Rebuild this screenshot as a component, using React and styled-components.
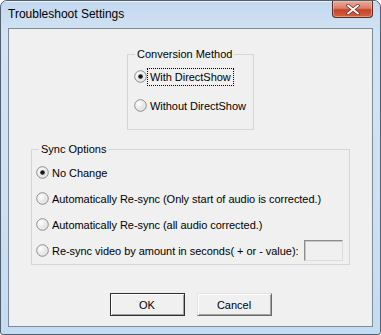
import React from 'react';
import styled, { createGlobalStyle } from 'styled-components';

const GlobalStyle = createGlobalStyle`
  html, body {
    margin: 0;
    padding: 0;
    background: #ffffff;
  }
  body {
    font-family: Tahoma, "Liberation Sans", Arial, sans-serif;
  }
  * {
    box-sizing: border-box;
  }
`;

const RadioMark = ({ checked }) => (
  <svg width="13" height="13" viewBox="0 0 13 13">
    <defs>
      <radialGradient id={checked ? 'rgOn' : 'rgOff'} cx="0.35" cy="0.35" r="0.7">
        <stop offset="0" stopColor="#ffffff" />
        <stop offset="1" stopColor="#d6d6d6" />
      </radialGradient>
    </defs>
    <circle cx="6.5" cy="6.5" r="5.8" fill={`url(#${checked ? 'rgOn' : 'rgOff'})`} stroke="#8e8f8f" strokeWidth="1" />
    <circle cx="6.5" cy="6.5" r="4.3" fill="none" stroke="#f4f4f4" strokeWidth="0.8" />
    {checked && <circle cx="6.5" cy="6.5" r="2.3" fill="#1a1a1a" />}
  </svg>
);

const Radio = ({ checked, focused, children }) => (
  <RadioRow>
    <RadioMark checked={checked} />
    <RadioLabel $focused={focused}>{children}</RadioLabel>
  </RadioRow>
);

export default function App() {
  return (
    <>
      <GlobalStyle />
      <Window>
        <TitleBar>
          <Title>Troubleshoot Settings</Title>
          <CloseButton>
            <svg width="14" height="11" viewBox="0 0 14 11">
              <path d="M2 1.5 L12 9.5 M12 1.5 L2 9.5" stroke="#6b2a22" strokeWidth="3.4" strokeLinecap="round" />
              <path d="M2 1.5 L12 9.5 M12 1.5 L2 9.5" stroke="#ffffff" strokeWidth="2" strokeLinecap="round" />
            </svg>
          </CloseButton>
        </TitleBar>
        <Client>
          <Group $width={127} $height={76} $pad="11px 0 0 6px" $gap={8}>
            <Legend>Conversion Method</Legend>
            <Radio checked focused>With DirectShow</Radio>
            <Radio>Without DirectShow</Radio>
          </Group>
          <Group $width={319} $height={116} $pad="12px 0 0 4px" $gap={5} $top={19}>
            <Legend>Sync Options</Legend>
            <Radio checked>No Change</Radio>
            <Radio>Automatically Re-sync (Only start of audio is corrected.)</Radio>
            <Radio>Automatically Re-sync (all audio corrected.)</Radio>
            <RadioRow>
              <RadioMark />
              <RadioLabel>Re-sync video by amount in seconds( + or - value):</RadioLabel>
              <Field />
            </RadioRow>
          </Group>
          <ButtonRow>
            <Button $default>OK</Button>
            <Button>Cancel</Button>
          </ButtonRow>
        </Client>
      </Window>
    </>
  );
}

const Window = styled.div`
  width: 381px;
  height: 335px;
  display: flex;
  flex-direction: column;
  border: 1px solid #4f5f70;
  border-radius: 7px 7px 3px 3px;
  background: linear-gradient(180deg, #c3d8ef 0%, #d3e3f3 10%, #cfe0f1 60%, #c4dcf1 100%);
  overflow: hidden;
`;

const TitleBar = styled.div`
  height: 27px;
  display: flex;
  align-items: flex-start;
  justify-content: space-between;
  padding-left: 7px;
  padding-right: 7px;
  box-shadow: inset 0 1px 0 rgba(255, 255, 255, 0.7);
`;

const Title = styled.div`
  font-family: "Segoe UI", "Liberation Sans", Arial, sans-serif;
  font-size: 12px;
  color: #000000;
  line-height: 14px;
  margin-top: 6px;
`;

const CloseButton = styled.div`
  width: 41px;
  height: 17px;
  display: flex;
  align-items: center;
  justify-content: center;
  border: 1px solid #5a2b27;
  border-top: none;
  border-radius: 0 0 4px 4px;
  background: linear-gradient(180deg, #e8ab98 0%, #d9806a 45%, #c8442b 55%, #d3613f 100%);
  box-shadow: inset 0 0 0 1px rgba(255, 210, 200, 0.45);
`;

const Client = styled.div`
  flex: 1;
  margin: 0 7px 7px;
  border: 1px solid #7c8b9b;
  background: #f0f0f0;
  display: flex;
  flex-direction: column;
  align-items: center;
  padding-top: 25px;
  font-family: Tahoma, "Liberation Sans", Arial, sans-serif;
  font-size: 11px;
  color: #000000;
`;

const Group = styled.div`
  position: relative;
  width: ${(p) => p.$width}px;
  height: ${(p) => p.$height}px;
  margin-top: ${(p) => p.$top || 0}px;
  border: 1px solid #d5d5d5;
  display: flex;
  flex-direction: column;
  gap: ${(p) => p.$gap}px;
  padding: ${(p) => p.$pad};
`;

const Legend = styled.div`
  position: absolute;
  top: -8px;
  left: 7px;
  padding: 0 2px 0 2px;
  background: #f0f0f0;
  line-height: 14px;
`;

const RadioRow = styled.div`
  display: flex;
  align-items: center;
  height: 21px;
`;

const RadioLabel = styled.span`
  line-height: 14px;
  padding: 1px 2px;
  white-space: nowrap;
  letter-spacing: -0.04px;
  border: 1px dotted ${(p) => (p.$focused ? '#000000' : 'transparent')};
`;

const Field = styled.div`
  width: 39px;
  height: 21px;
  margin-left: 2px;
  background: #f0f0f0;
  border: 1px solid;
  border-color: #8c8c8c #dcdcdc #dcdcdc #8c8c8c;
  box-shadow: inset 1px 1px 0 #c8c8c8;
`;

const ButtonRow = styled.div`
  display: flex;
  gap: 12px;
  margin-top: 28px;
`;

const Button = styled.div`
  width: 75px;
  height: 23px;
  display: flex;
  align-items: center;
  justify-content: center;
  background: #f0f0f0;
  border: 1px solid;
  border-color: ${(p) => (p.$default ? '#2f2f2f' : '#e3e3e3 #6b6b6b #6b6b6b #e3e3e3')};
  box-shadow: inset 1px 1px 0 #ffffff, inset -1px -1px 0 #a0a0a0;
`;
